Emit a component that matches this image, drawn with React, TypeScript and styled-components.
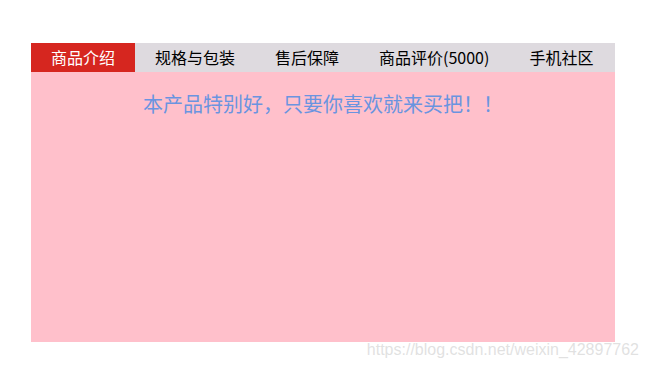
import React, { useState } from 'react';
import styled, { createGlobalStyle } from 'styled-components';

const tabs = ['商品介绍', '规格与包装', '售后保障', '商品评价(5000)', '手机社区'];

const GlobalStyle = createGlobalStyle`
  html, body {
    margin: 0;
    padding: 0;
    background: #ffffff;
  }
  body {
    font-family: "Noto Sans CJK SC", "Microsoft YaHei", sans-serif;
  }
`;

const App: React.FC = () => {
  const [active, setActive] = useState(0);

  return (
    <Page>
      <GlobalStyle />
      <Tab>
        <TabList>
          {tabs.map((name, i) => (
            <TabItem key={name} $active={i === active} onClick={() => setActive(i)}>
              {name}
            </TabItem>
          ))}
        </TabList>
        <TabContent>
          <Intro>本产品特别好，只要你喜欢就来买把！！</Intro>
        </TabContent>
      </Tab>
      <Watermark>https://blog.csdn.net/weixin_42897762</Watermark>
    </Page>
  );
};

export default App;

const Page = styled.div`
  position: relative;
  width: 648px;
  height: 369px;
  padding: 43px 0 0 31px;
  box-sizing: border-box;
`;

const Tab = styled.div`
  width: 584px;
`;

const TabList = styled.ul`
  display: flex;
  height: 29px;
  margin: 0;
  padding: 0;
  list-style: none;
  background-color: #dedadf;
`;

const TabItem = styled.li<{ $active: boolean }>`
  height: 29px;
  line-height: 29px;
  padding: 0 20px;
  font-size: 16px;
  cursor: pointer;
  color: ${({ $active }) => ($active ? '#ffffff' : '#000000')};
  background-color: ${({ $active }) => ($active ? '#d6261f' : 'transparent')};
`;

const TabContent = styled.div`
  height: 270px;
  background-color: pink;
  padding-top: 19px;
  box-sizing: border-box;
`;

const Intro = styled.p`
  margin: 0;
  text-align: center;
  font-size: 20px;
  line-height: 26px;
  color: #6a94e0;
`;

const Watermark = styled.div`
  position: absolute;
  right: 9px;
  top: 341px;
  font-family: "Liberation Sans", Arial, sans-serif;
  font-size: 16px;
  color: rgba(200, 200, 200, 0.55);
`;
